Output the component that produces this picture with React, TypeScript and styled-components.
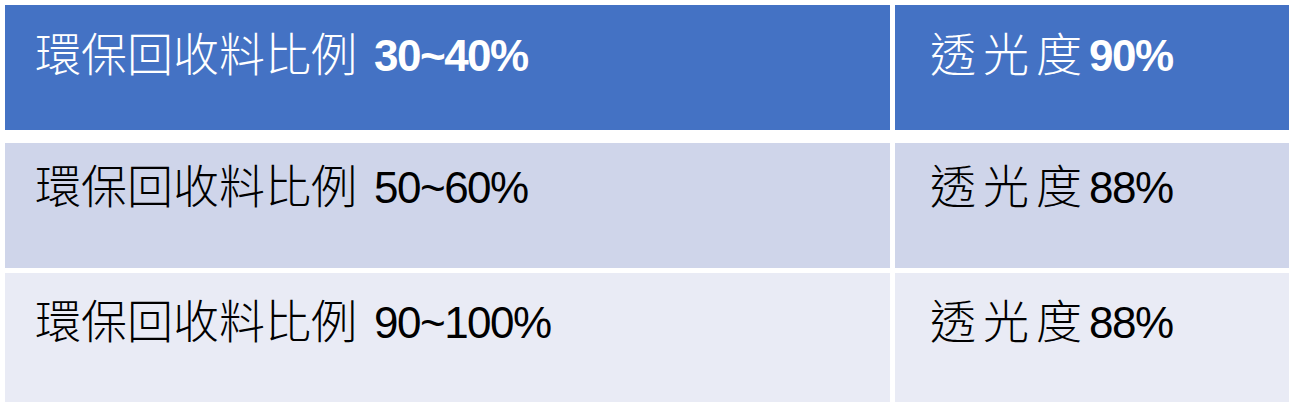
import React from 'react';
import styled, { createGlobalStyle } from 'styled-components';

const GlobalStyle = createGlobalStyle`
  html, body {
    margin: 0;
    padding: 0;
    background: #ffffff;
  }
`;

type Row = {
  ratio: string;
  light: string;
  head?: boolean;
  bg: string;
  height: number;
  gap: number;
  top: number;
};

const rows: Row[] = [
  { ratio: '30~40%', light: '90%', head: true, bg: '#4472c4', height: 125, gap: 0, top: 18 },
  { ratio: '50~60%', light: '88%', bg: '#cfd5ea', height: 125, gap: 13, top: 12 },
  { ratio: '90~100%', light: '88%', bg: '#e9ebf5', height: 129, gap: 5, top: 17 },
];

const App = () => {
  return (
    <Page>
      <GlobalStyle />
      <Table>
        {rows.map((row, i) => (
          <TableRow key={i} $height={row.height} $gap={row.gap}>
            <Cell $bg={row.bg} $head={row.head} $top={row.top} $pad={30}>
              <Cjk>環保回收料比例</Cjk>
              <Num $head={row.head} $lead>{row.ratio}</Num>
            </Cell>
            <Cell $bg={row.bg} $head={row.head} $top={row.top} $pad={35}>
              <Cjk $wide>透光度</Cjk>
              <Num $head={row.head}>{row.light}</Num>
            </Cell>
          </TableRow>
        ))}
      </Table>
    </Page>
  );
};

export default App;

const Page = styled.div`
  width: 1302px;
  height: 410px;
  padding: 5px;
  box-sizing: border-box;
  background: #ffffff;
`;

const Table = styled.div`
  width: 1284px;
  display: flex;
  flex-direction: column;
`;

const TableRow = styled.div<{ $height: number; $gap: number }>`
  display: grid;
  grid-template-columns: 885px 394px;
  column-gap: 5px;
  height: ${(p) => p.$height}px;
  margin-top: ${(p) => p.$gap}px;
`;

const Cell = styled.div<{ $bg: string; $head?: boolean; $top: number; $pad: number }>`
  background: ${(p) => p.$bg};
  color: ${(p) => (p.$head ? '#ffffff' : '#000000')};
  display: flex;
  align-items: baseline;
  align-content: flex-start;
  padding: ${(p) => p.$top}px 0 0 ${(p) => p.$pad}px;
  box-sizing: border-box;
  line-height: 56px;
  white-space: nowrap;
`;

const Cjk = styled.span<{ $wide?: boolean }>`
  font-family: "Noto Sans CJK TC", "Noto Sans CJK SC", sans-serif;
  font-size: 46px;
  font-weight: 300;
  letter-spacing: ${(p) => (p.$wide ? '7px' : '0')};
`;

const Num = styled.span<{ $head?: boolean; $lead?: boolean }>`
  font-family: "Liberation Sans", Arial, sans-serif;
  font-size: 44px;
  letter-spacing: -1.5px;
  margin-left: ${(p) => (p.$lead ? '17px' : '0')};
  font-weight: ${(p) => (p.$head ? 700 : 400)};
`;
